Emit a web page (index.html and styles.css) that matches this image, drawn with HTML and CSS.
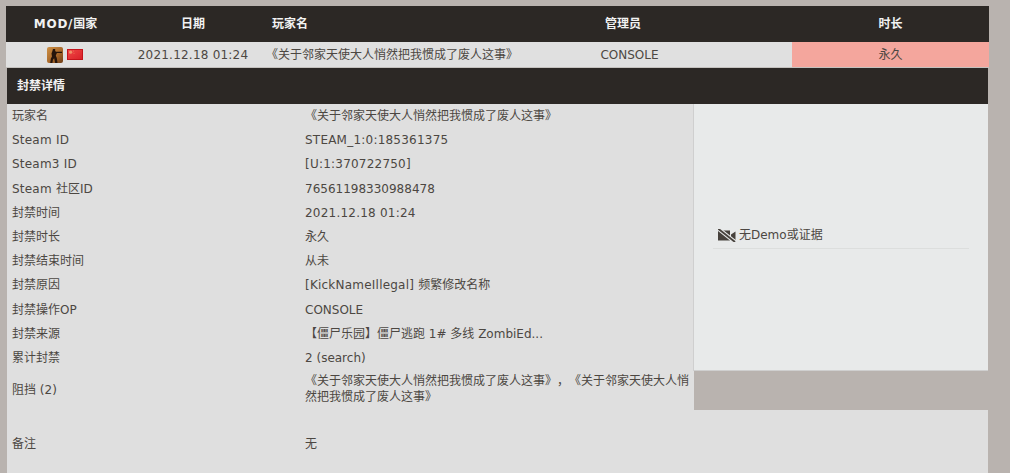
FILE: index.html
```html
<!DOCTYPE html>
<html lang="zh-CN">
<head>
<meta charset="utf-8">
<title>封禁详情</title>
<link rel="stylesheet" href="styles.css">
</head>
<body>
<main class="page">
  <div class="cols head">
    <div class="c"><span class="mod">MOD/</span>国家</div>
    <div class="c">日期</div>
    <div class="l">玩家名</div>
    <div class="c">管理员</div>
    <div class="c">时长</div>
  </div>
  <div class="cols row">
    <div class="c icons">
      <svg class="game" viewBox="0 0 16 16" width="16" height="16">
        <defs><linearGradient id="g" x1="0" y1="0" x2="1" y2="1"><stop offset="0" stop-color="#cf9145"/><stop offset=".55" stop-color="#a8682a"/><stop offset="1" stop-color="#6e3d16"/></linearGradient></defs>
        <rect width="16" height="16" rx="2" fill="url(#g)"/>
        <path d="M6 2h2.2v2l.8.8h6v1.1H10l-.6 1.2-.6 1.7 1 2.2.7 5H8.2l-1-4.7L6 12.400l-.6 3.600H3.200l.7-4.400L5 9.400 4.500 6.600l.9-2.600z" fill="#24140b"/>
      </svg>
      <svg class="flag" viewBox="0 0 16 11" width="16" height="11">
        <defs><linearGradient id="f" x1="0" y1="0" x2="1" y2="1"><stop offset="0" stop-color="#f04a48"/><stop offset="1" stop-color="#d81e26"/></linearGradient></defs>
        <rect width="16" height="11" fill="url(#f)"/>
        <rect x=".5" y=".5" width="15" height="10" fill="none" stroke="#c4141c"/>
        <circle cx="3.600" cy="3.200" r="1.600" fill="#f08f68"/>
        <circle cx="6.400" cy="2" r=".5" fill="#f0805a"/>
        <circle cx="7" cy="4.200" r=".5" fill="#f0805a"/>
      </svg>
    </div>
    <div class="c"><span class="lat">2021.12.18 01:24</span></div>
    <div class="l">《关于邻家天使大人悄然把我惯成了废人这事》</div>
    <div class="c">CONSOLE</div>
    <div class="c perm">永久</div>
  </div>
  <section class="details">
    <h2 class="title">封禁详情</h2>
    <div class="split">
      <div class="info">
        <div class="kv"><span>玩家名</span><span>《关于邻家天使大人悄然把我惯成了废人这事》</span></div>
        <div class="kv"><span class="lat">Steam ID</span><span class="lat">STEAM_1:0:185361375</span></div>
        <div class="kv"><span class="lat">Steam3 ID</span><span class="lat">[U:1:370722750]</span></div>
        <div class="kv"><span><span class="lat">Steam </span>社区ID</span><span>76561198330988478</span></div>
        <div class="kv"><span>封禁时间</span><span class="lat">2021.12.18 01:24</span></div>
        <div class="kv"><span>封禁时长</span><span>永久</span></div>
        <div class="kv"><span>封禁结束时间</span><span>从未</span></div>
        <div class="kv"><span>封禁原因</span><span><span class="lat">[KickNameIllegal] </span>频繁修改名称</span></div>
        <div class="kv"><span>封禁操作OP</span><span>CONSOLE</span></div>
        <div class="kv"><span>封禁来源</span><span>【僵尸乐园】僵尸逃跑 1# 多线 ZombiEd...</span></div>
        <div class="kv"><span>累计封禁</span><span>2 (search)</span></div>
        <div class="kv tall"><span>阻挡 (2)</span><span class="wrap">《关于邻家天使大人悄然把我惯成了废人这事》，《关于邻家天使大人悄然把我惯成了废人这事》</span></div>
      </div>
      <aside class="demo">
        <div class="demo-line">
          <svg viewBox="0 0 18 13" width="18" height="13">
            <path d="M0 1.500h12v10H0zM13 5.500l4.500-3v8.500L13 8.500z" fill="#47423d"/>
            <path d="M0 -.5L17 13" stroke="#e8eaea" stroke-width="4"/>
            <path d="M0 -.5L17 13" stroke="#47423d" stroke-width="1.800"/>
          </svg>
          <span>无Demo或证据</span>
        </div>
      </aside>
    </div>
    <div class="notes">
      <div class="kv"><span>备注</span><span>无</span></div>
    </div>
  </section>
</main>
</body>
</html>
```
FILE: styles.css
```css
html, body {
  margin: 0;
  height: 100%;
  overflow: hidden;
}
body {
  background: #b9b3af;
  color: #4c4742;
  font: 12px/16px "DejaVu Sans", "Noto Sans CJK SC", sans-serif;
  text-spacing-trim: space-all;
}
.page {
  width: 983px;
  padding: 6px 0 0 6px;
}
.lat { letter-spacing: .22px; }
.mod { letter-spacing: .7px; }
.cols {
  display: grid;
  align-items: center;
}
.c { text-align: center; }
.l { white-space: nowrap; }
.head {
  grid-template-columns: 119px 136px 193px 338px 197px;
  height: 36px;
  background: #2c2825;
  color: #f2f2f2;
  font-weight: bold;
}
.head .l { padding-left: 11px; }
.row {
  grid-template-columns: 119px 136px 206px 325px 197px;
  height: 25px;
  background: #e0e0e0;
  border-bottom: 1px solid #c4c1be;
  align-items: stretch;
}
.row > div {
  display: flex;
  align-items: center;
  justify-content: center;
}
.row > .l {
  justify-content: flex-start;
  padding-left: 5px;
}
.row > .icons {
  gap: 4px;
  padding-right: 1px;
}
.game, .flag { display: block; }
.row > .perm { background: #f4a69d; }
.details {
  margin: 0 1px;
}
.title {
  margin: 0;
  height: 36px;
  line-height: 36px;
  padding-left: 10px;
  background: #2c2825;
  color: #f2f2f2;
  font-size: 12px;
  font-weight: bold;
}
.split {
  display: flex;
  align-items: flex-start;
}
.info {
  width: 687px;
  flex: none;
  background: #dfdfdf;
}
.kv {
  display: grid;
  grid-template-columns: 293px 1fr;
  align-items: center;
  height: 24.2px;
  padding-left: 5px;
  box-sizing: border-box;
}
.kv.tall {
  height: 40px;
}
.wrap {
  padding-right: 5px;
  margin-top: -2px;
}
.demo {
  flex: 1;
  height: 267px;
  box-sizing: border-box;
  margin-left: -1px;
  background: #e8eaea;
  border-left: 1px solid #cfcfcf;
  border-bottom: 1px solid #cfcfcf;
  padding: 118px 19px 0 19px;
}
.demo-line {
  display: flex;
  align-items: center;
  gap: 3px;
  height: 26px;
  padding-left: 5px;
  border-bottom: 1px solid #dcdedd;
}
.notes {
  height: 72px;
  padding-top: 22px;
  box-sizing: border-box;
  background: #dfdfdf;
}
```
